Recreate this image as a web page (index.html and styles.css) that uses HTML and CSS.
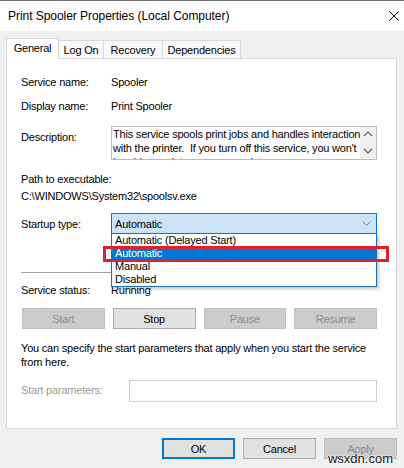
FILE: index.html
```html
<!DOCTYPE html>
<html>
<head>
<meta charset="utf-8">
<title>Print Spooler Properties</title>
<link rel="stylesheet" href="styles.css">
</head>
<body>
<div class="window">
  <div class="titlebar">
    <span class="title">Print Spooler Properties (Local Computer)</span>
    <svg class="close" width="10" height="10" viewBox="0 0 10 10"><path d="M0.5 0.5 L9.5 9.5 M9.5 0.5 L0.5 9.5" stroke="#000" stroke-width="1" fill="none"/></svg>
  </div>
  <div class="client">
    <div class="tabs">
      <div class="tab tab-general active">General</div>
      <div class="tab tab-logon">Log On</div>
      <div class="tab tab-recovery">Recovery</div>
      <div class="tab tab-deps">Dependencies</div>
    </div>
    <div class="panel">
      <div class="row r-name"><span class="lbl">Service name:</span><span class="val">Spooler</span></div>
      <div class="row r-disp"><span class="lbl">Display name:</span><span class="val">Print Spooler</span></div>
      <div class="row r-desc">
        <span class="lbl lbl-desc">Description:</span>
        <div class="desc">
          <div class="desc-text">This service spools print jobs and handles interaction<br>with the printer.&nbsp; If you turn off this service, you won't<br>be able to print or see your printers.</div>
          <div class="scroll">
            <svg width="10" height="6" viewBox="0 0 10 6"><path d="M1 5 L5 1 L9 5" stroke="#606060" stroke-width="1.2" fill="none"/></svg>
            <svg width="10" height="6" viewBox="0 0 10 6"><path d="M1 1 L5 5 L9 1" stroke="#606060" stroke-width="1.2" fill="none"/></svg>
          </div>
        </div>
      </div>
      <div class="path-lbl">Path to executable:</div>
      <div class="path-val">C:\WINDOWS\System32\spoolsv.exe</div>
      <div class="row r-startup">
        <span class="lbl lbl-startup">Startup type:</span>
        <div class="combo-wrap">
          <div class="combo"><span>Automatic</span><svg width="9" height="5" viewBox="0 0 9 5"><path d="M0.5 0.5 L4.5 4.5 L8.5 0.5" stroke="#7a7a7a" stroke-width="1" fill="none"/></svg></div>
          <ul class="dropdown">
            <li>Automatic (Delayed Start)</li>
            <li class="sel">Automatic</li>
            <li>Manual</li>
            <li>Disabled</li>
          </ul>
          <div class="redbox"></div>
        </div>
      </div>
      <hr class="sep">
      <div class="row r-status"><span class="lbl">Service status:</span><span class="val">Running</span></div>
      <div class="svc-buttons">
        <div class="btn disabled">Start</div>
        <div class="btn">Stop</div>
        <div class="btn disabled">Pause</div>
        <div class="btn disabled">Resume</div>
      </div>
      <p class="hint">You can specify the start parameters that apply when you start the service<br>from here.</p>
      <div class="row r-params">
        <span class="lbl lbl-params">Start parameters:</span>
        <div class="input"></div>
      </div>
    </div>
    <div class="dlg-buttons">
      <div class="btn dbtn default">OK</div>
      <div class="btn dbtn">Cancel</div>
      <div class="btn dbtn disabled">Apply</div>
    </div>
  </div>
  <div class="watermark">wsxdn.com</div>
</div>
</body>
</html>
```

FILE: styles.css
```css
html, body {
  margin: 0;
  padding: 0;
}
body {
  width: 404px;
  height: 468px;
  overflow: hidden;
  font-family: "Liberation Sans", Arial, sans-serif;
  font-size: 11px;
  letter-spacing: -0.2px;
  color: #000;
  background: #f0f0f0;
}
.window {
  position: relative;
  height: 468px;
  box-sizing: border-box;
  border-top: 1px solid #6e6e6e;
  background: #f0f0f0;
}
.titlebar {
  height: 30px;
  background: #fff;
  display: flex;
  align-items: center;
  justify-content: space-between;
  padding: 0 5px 0 8px;
}
.title {
  font-size: 12px;
  letter-spacing: -0.05px;
}
.client {
  padding: 7px 7px 0 6px;
}
.tabs {
  display: flex;
  align-items: flex-end;
  height: 20px;
}
.tab {
  height: 18px;
  box-sizing: border-box;
  border: 1px solid #d9d9d9;
  border-bottom: none;
  background: #f9f9f9;
  display: flex;
  align-items: center;
  justify-content: center;
  margin-left: -1px;
  padding-top: 1px;
}
.tab-general { width: 53px; margin-left: 0; }
.tab-logon { width: 46px; }
.tab-recovery { width: 60px; }
.tab-deps { width: 79px; }
.tab.active {
  height: 21px;
  margin-bottom: -1px;
  background: #fff;
  position: relative;
  z-index: 2;
  padding-top: 0;
  padding-bottom: 3px;
}
.panel {
  height: 371px;
  box-sizing: border-box;
  border: 1px solid #d9d9d9;
  background: #fff;
  padding: 15px 19px 0 14px;
  line-height: 16px;
  position: relative;
}
.row {
  display: flex;
  align-items: flex-start;
}
.lbl {
  width: 90px;
  flex: none;
}
.r-disp { margin-top: 8px; }
.r-desc { margin-top: 12px; }
.lbl-desc { margin-top: 3px; }
.desc {
  flex: 1;
  height: 34px;
  box-sizing: border-box;
  border: 1px solid #bdbdbd;
  display: flex;
  overflow: hidden;
}
.desc-text {
  flex: 1;
  padding-left: 1px;
  line-height: 14px;
  white-space: nowrap;
  overflow: hidden;
}
.scroll {
  width: 16px;
  flex: none;
  background: #f0f0f0;
  display: flex;
  flex-direction: column;
  justify-content: space-between;
  align-items: center;
  padding: 4px 0 5px;
  box-sizing: border-box;
}
.scroll svg { display: block; }
.path-lbl { margin-top: 11px; }
.path-val { margin-top: 1px; }
.r-startup { margin-top: 9px; }
.lbl-startup { margin-top: 3px; }
.combo-wrap {
  position: relative;
  flex: 1;
}
.combo {
  height: 21px;
  box-sizing: border-box;
  border: 1px solid #0078d7;
  background: #cce4f7;
  padding: 0 5px 0 3px;
  display: flex;
  align-items: center;
  justify-content: space-between;
}
.combo svg { display: block; }
.dropdown {
  position: absolute;
  left: 0;
  right: 0;
  top: 20px;
  margin: 0;
  padding: 0;
  list-style: none;
  border: 1px solid #1f6fb5;
  background: #fff;
  z-index: 5;
  box-shadow: 2px 2px 3px rgba(0, 0, 0, 0.22);
}
.dropdown li {
  height: 13px;
  line-height: 13px;
  padding-left: 3px;
}
.dropdown li.sel {
  background: #0078d7;
  color: #fff;
}
.redbox {
  position: absolute;
  left: -8px;
  top: 33px;
  width: 286px;
  height: 16px;
  box-sizing: border-box;
  border: 3px solid #e0202e;
  z-index: 6;
}
.sep {
  margin: 38px 0 0;
  border: none;
  border-top: 1px solid #a0a0a0;
  height: 0;
}
.r-status { margin-top: 9px; }
.svc-buttons {
  margin-top: 10px;
  display: grid;
  grid-template-columns: repeat(4, 1fr);
  column-gap: 8px;
  padding-left: 1px;
}
.btn {
  height: 21px;
  box-sizing: border-box;
  border: 1px solid #adadad;
  background: #e1e1e1;
  display: flex;
  align-items: center;
  justify-content: center;
  line-height: 16px;
}
.btn.disabled {
  background: #cccccc;
  border-color: #bfbfbf;
  color: #8c8c8c;
}
.hint {
  margin: 12px 0 0;
  line-height: 14px;
}
.r-params { margin-top: 11px; }
.lbl-params {
  width: 108px;
  margin-top: 2px;
  color: #9a9a9a;
}
.input {
  flex: 1;
  height: 22px;
  box-sizing: border-box;
  border: 1px solid #cccccc;
  background: #fff;
}
.dlg-buttons {
  display: flex;
  justify-content: flex-end;
  column-gap: 8px;
  margin-top: 9px;
}
.dbtn {
  width: 73px;
}
.btn.default {
  border: 2px solid #0078d7;
}
.watermark {
  position: absolute;
  right: 11px;
  bottom: 2px;
  font-size: 13px;
  line-height: 14px;
  letter-spacing: 0;
  color: #111;
  text-shadow: 0 0 2px #fff, 0 0 2px #fff, 0 0 1px #fff;
}
```
